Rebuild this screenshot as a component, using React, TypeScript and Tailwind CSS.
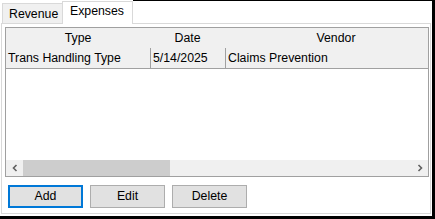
import React from 'react';

const font = { fontFamily: '"Liberation Sans", Arial, sans-serif' };

const Chevron: React.FC<{ dir: 'left' | 'right' }> = ({ dir }) => (
  <svg width="8" height="8" viewBox="0 0 8 8">
    <path
      d={dir === 'left' ? 'M5.5 1 L2.5 4 L5.5 7' : 'M2.5 1 L5.5 4 L2.5 7'}
      fill="none"
      stroke="#606060"
      strokeWidth="1.6"
    />
  </svg>
);

const App: React.FC = () => {
  return (
    <div
      className="w-[435px] h-[219px] bg-white flex flex-col border-r-[3px] border-b-[3px] border-black text-[12.3px] text-black"
      style={font}
    >
      {/* Tab strip */}
      <div className="flex h-[23px] items-end pl-[2px]">
        <div className="h-[20px] w-[61px] border border-b-0 border-[#d9d9d9] bg-[#f0f0f0] pl-[6px] pt-[3px] leading-[14px]">
          Revenue
        </div>
        <div className="relative z-10 -ml-px -mb-px h-[23px] w-[71px] border border-b-0 border-[#d9d9d9] bg-white pl-[7px] pt-[2px] leading-[14px]">
          Expenses
        </div>
        <div className="flex-1 self-start h-full border-t border-black" />
      </div>

      {/* Tab panel */}
      <div className="flex-1 mx-[1px] mb-[2px] border border-[#d9d9d9] pl-[3px] pt-[3px]">
        {/* Grid */}
        <div className="w-[424px] h-[150px] border border-[#a0a0a0] flex flex-col overflow-hidden">
          <div className="flex h-[20px] bg-[#f0f0f0] items-center shrink-0 whitespace-nowrap">
            <div className="w-[144px] shrink-0 text-center">Type</div>
            <div className="w-[75px] shrink-0 text-center">Date</div>
            <div className="w-[222px] shrink-0 text-center">Vendor</div>
          </div>
          <div className="flex h-[21px] bg-[#f0f0f0] border-b border-[#a0a0a0] shrink-0 whitespace-nowrap">
            <div className="w-[145px] shrink-0 pl-[2px] flex items-center border-r border-[#a0a0a0]">Trans Handling Type</div>
            <div className="w-[75px] shrink-0 pl-[2px] flex items-center border-r border-[#a0a0a0]">5/14/2025</div>
            <div className="w-[201px] shrink-0 pl-[2px] flex items-center">Claims Prevention</div>
            <div className="shrink-0 flex items-center pl-[1px] text-[#3a1470]">n</div>
          </div>
          <div className="flex-1 bg-white" />
          <div className="flex h-[16px] bg-[#f0f0f0] shrink-0">
            <div className="w-[17px] flex items-center justify-center">
              <Chevron dir="left" />
            </div>
            <div className="w-[147px] bg-[#cdcdcd]" />
            <div className="flex-1" />
            <div className="w-[17px] flex items-center justify-center">
              <Chevron dir="right" />
            </div>
          </div>
        </div>

        {/* Buttons */}
        <div className="flex gap-[7px] mt-[8px] pl-[3px]">
          <button className="w-[75px] h-[23px] bg-[#e1e1e1] border-2 border-[#0078d7] leading-none">Add</button>
          <button className="w-[75px] h-[23px] bg-[#e1e1e1] border border-[#adadad] leading-none">Edit</button>
          <button className="w-[75px] h-[23px] bg-[#e1e1e1] border border-[#adadad] leading-none">Delete</button>
        </div>
      </div>
    </div>
  );
};

export default App;
